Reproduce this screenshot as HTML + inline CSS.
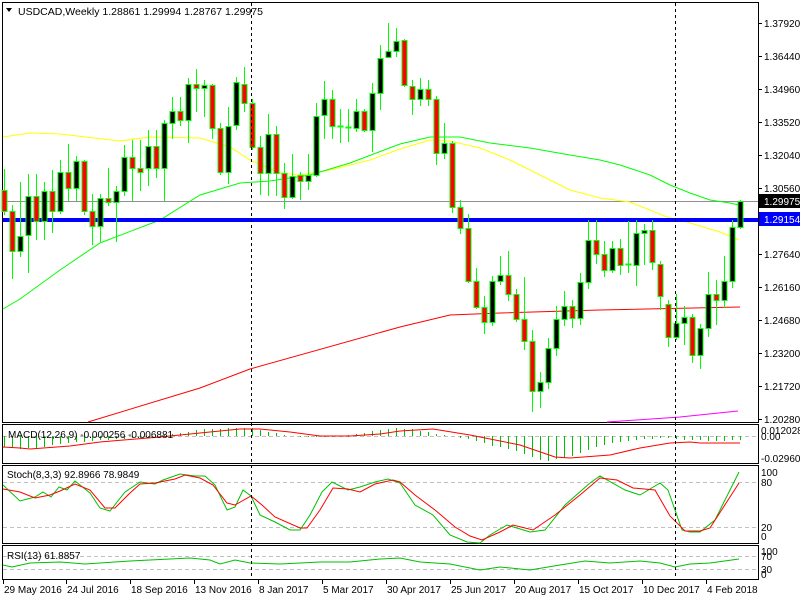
<!DOCTYPE html>
<html><head><meta charset="utf-8"><style>
html,body{margin:0;padding:0;background:#fff;width:800px;height:600px;overflow:hidden}
svg{display:block}
text{font-family:"Liberation Sans",sans-serif;font-size:10px;fill:#000}
</style></head><body>
<svg id="s" width="800" height="600" xmlns="http://www.w3.org/2000/svg"></svg>
<script>
var C=[
[190,211,169,215,0],[211,251,205,279,0],[251,236,182,257,1],[235,196,174,273,1],[196,221,174,240,0],[221,191,182,240,1],[191,211,170,233,0],[211,172,160,214,1],[172,188,144,201,0],[188,161,156,201,1],
[161,211,160,215,0],[211,226,194,245,0],[226,198,194,242,1],[198,202,168,206,0],[202,191,186,242,1],[191,157,145,196,1],[157,168,140,201,0],[168,172,140,191,0],[168,146,130,186,1],[146,168,130,178,0],
[168,123,120,201,1],[123,111,97,139,1],[111,120,97,126,0],[120,84,78,143,1],[84,88,69,112,0],[88,85,80,117,1],[85,128,84,139,0],[128,172,123,175,0],[172,126,107,184,1],[125,82,77,130,1],
[84,103,67,112,0],[103,147,99,150,0],[147,173,136,195,0],[173,134,114,196,1],[134,173,126,196,0],[173,197,163,209,0],[197,176,154,199,1],[175,181,172,200,0],[181,175,154,190,1],[175,116,103,177,1],
[115,99,81,139,1],[99,126,90,139,0],[127,126,109,143,2],[128,127,109,142,2],[128,111,99,132,1],[111,130,109,132,0],[130,93,83,152,1],[93,58,45,110,1],[57,51,23,58,1],[51,41,28,57,1],
[40,85,39,87,0],[86,99,80,115,0],[99,89,78,106,1],[89,99,80,106,0],[99,153,96,165,0],[153,143,123,159,1],[143,207,141,213,0],[207,228,200,234,0],[228,281,214,283,0],[281,307,268,309,0],
[307,322,296,334,0],[322,281,276,326,1],[281,275,256,285,1],[275,294,251,301,0],[294,319,289,322,0],[319,341,277,350,0],[341,391,330,412,0],[391,382,372,408,1],[382,348,338,389,1],[348,319,306,356,1],
[319,306,291,326,1],[306,318,300,328,0],[318,282,273,325,1],[282,240,220,289,1],[240,254,220,264,0],[254,270,241,277,0],[270,248,241,273,1],[248,265,239,275,0],[265,264,221,273,2],[265,233,220,286,1],
[233,230,224,265,1],[230,262,220,270,0],[264,296,261,310,0],[304,337,300,347,0],[337,323,294,340,1],[323,317,306,345,1],[317,355,314,363,0],[355,328,324,369,1],[328,294,272,337,1],[294,300,280,325,0],
[300,281,256,308,1],[281,227,220,288,1],[227,201,200,229,1]];
var o='';
function pl(p,c,w,extra){return '<polyline fill="none" stroke="'+c+'" stroke-width="'+(w||1)+'" '+(extra||'')+' points="'+p+'"/>';}
o+='<rect x="2.5" y="2.5" width="756" height="420" fill="none" stroke="#000"/>';
o+='<rect x="2.5" y="424.5" width="756" height="39" fill="none" stroke="#000"/>';
o+='<rect x="2.5" y="465.5" width="756" height="78" fill="none" stroke="#000"/>';
o+='<rect x="2.5" y="545.5" width="756" height="34" fill="none" stroke="#000"/>';
o+='<line x1="3" y1="201.5" x2="758" y2="201.5" stroke="#909090"/>';
o+=pl('3,137 30,133 60,134 120,141 150,137 200,138 230,147 250,160 280,173 300,175 330,170 370,160 400,149 430,140 450,141 480,148 510,160 540,175 570,190 600,198 630,202 667,217 687,222 700,226 720,232 739,240','#ffff00');
o+=pl('3,309 20,299 60,270 100,243 160,220 200,195 240,183 270,181 310,175 350,163 400,144 430,137 460,137 490,143 530,148 570,155 600,160 620,165 650,175 670,185 690,193 710,200 730,203 739,205','#00ff00');
o+=pl('88,422 200,388 250,369 400,327 450,315 500,313 600,310 740,307','#ff0000');
o+=pl('607,422 680,417 738,411','#ff00ff');
o+='<rect x="3" y="218" width="755" height="4" fill="#0000ff"/>';
for(var i=0;i<C.length;i++){var c=C[i],x=4+8*i+0.5;
o+='<line x1="'+x+'" y1="'+c[2]+'" x2="'+x+'" y2="'+c[3]+'" stroke="#00ff00"/>';
var t=Math.min(c[0],c[1]),b=Math.max(c[0],c[1]);
if(c[4]==2){o+='<line x1="'+(x-3)+'" y1="'+t+'.5" x2="'+(x+3)+'" y2="'+t+'.5" stroke="#00ff00" stroke-width="2"/>';continue;}
o+='<rect x="'+(x-2.5)+'" y="'+(t+0.5)+'" width="5" height="'+Math.max(b-t,1)+'" fill="'+(c[4]?'#000':'#ff0000')+'" stroke="#00ff00"/>';}
o+='<line x1="3" y1="436.5" x2="758" y2="436.5" stroke="#c0c0c0" stroke-dasharray="4,3"/>';
var H=[[3,447],[19,449],[35,448],[67,443],[107,440],[140,438],[163,435],[187,432],[203,429],[251,428],[275,433],[300,437],[330,437],[355,434],[395,428],[411,429],[443,435],[475,440],[490,445],[515,450],[539,460],[547,461],[571,457],[595,447],[611,443],[635,440],[667,438],[690,440],[715,441],[739,440]];
function interp(A,x){for(var k=0;k<A.length-1;k++){if(x>=A[k][0]&&x<=A[k+1][0]){var f=(x-A[k][0])/(A[k+1][0]-A[k][0]);return A[k][1]+f*(A[k+1][1]-A[k][1]);}}return A[A.length-1][1];}
for(var i=0;i<C.length;i++){var x=4+8*i+0.5;var v=Math.round(interp(H,x));o+='<line x1="'+x+'" y1="436" x2="'+x+'" y2="'+v+'" stroke="#00c000"/>';}
o+=pl('3,447 20,448 30,449 70,446 100,442 160,437 210,432 240,429 260,429 290,432 320,436 350,436 380,434 400,431 433,429 470,435 520,445 555,457 570,458 610,455 640,448 670,443 690,442 700,443 740,443','#ff0000');
o+='<line x1="3" y1="482.5" x2="758" y2="482.5" stroke="#c0c0c0" stroke-dasharray="4,3"/><line x1="3" y1="527.5" x2="758" y2="527.5" stroke="#c0c0c0" stroke-dasharray="4,3"/>';
o+=pl('3,485 20,501 35,497 43,492 51,497 59,487 67,490 75,481 90,493 100,508 110,511 125,492 140,482 155,484 163,480 180,474 195,476 205,476 215,485 227,510 235,507 243,490 251,496 260,515 275,522 290,530 300,530 310,515 322,492 332,482 348,490 360,487 375,482 388,479 400,483 415,505 433,515 450,535 467,542 480,543 490,535 507,525 530,532 545,530 565,505 590,483 600,476 625,490 640,495 660,483 668,490 682,530 690,532 700,532 715,520 739,472','#00c000');
o+=pl('3,489 20,492 35,498 50,495 60,491 75,484 90,490 105,508 115,508 130,493 140,484 155,483 175,479 185,475 200,478 213,485 227,503 235,505 251,496 262,505 275,517 300,528 307,528 320,510 333,488 348,489 360,492 375,484 393,480 400,482 415,495 435,510 455,527 470,536 482,540 500,532 513,525 533,530 555,515 580,495 600,478 617,480 633,488 655,490 670,516 685,531 700,531 710,528 739,483','#ff0000');
o+='<line x1="3" y1="556.5" x2="758" y2="556.5" stroke="#c0c0c0" stroke-dasharray="4,3"/><line x1="3" y1="569.5" x2="758" y2="569.5" stroke="#c0c0c0" stroke-dasharray="4,3"/>';
o+=pl('3,565 12,567 30,563 60,562 85,564 130,561 190,558 210,560 220,564 235,560 250,563 280,564 320,562 350,562 380,559 400,558 420,562 450,564 480,570 500,567 530,570 560,565 585,561 610,563 640,561 660,563 675,567 690,564 710,563 739,559','#00c000');
o+='<line x1="251.5" y1="3" x2="251.5" y2="579" stroke="#000" stroke-dasharray="3,3"/><line x1="675.5" y1="3" x2="675.5" y2="579" stroke="#000" stroke-dasharray="3,3"/>';
var P=[['1.37920',23],['1.36440',56],['1.34960',89],['1.33520',122],['1.32040',155],['1.30560',188],['1.27640',254],['1.26160',287],['1.24680',320],['1.23200',353],['1.21720',386],['1.20280',419]];
P.forEach(function(p){o+='<line x1="758" y1="'+p[1]+'.5" x2="762" y2="'+p[1]+'.5" stroke="#000"/><text x="764" y="'+(p[1]+4)+'">'+p[0]+'</text>';});
o+='<rect x="759" y="194" width="41" height="14" fill="#000"/><text x="764" y="205" style="fill:#fff">1.29975</text>';
o+='<rect x="759" y="212" width="41" height="14" fill="#0000ff"/><text x="764" y="223" style="fill:#fff">1.29154</text>';
var S=[['0.012028',430],['0.00',436],['-0.029605',458],['100',472],['80',482],['20',527],['0',536],['100',551],['70',556],['30',569],['0',574]];
S.forEach(function(p){o+='<text x="761" y="'+(p[1]+4)+'">'+p[0]+'</text>';});
o+='<path d="M6,8 L12,8 L9,12 Z" fill="#000"/><text x="18" y="15" style="font-size:10.5px">USDCAD,Weekly  1.28861 1.29994 1.28767 1.29975</text>';
o+='<text x="8" y="438">MACD(12,26,9) -0.000256 -0.006881</text>';
o+='<text x="7" y="478">Stoch(8,3,3) 92.8966 78.9849</text>';
o+='<text x="7" y="559">RSI(13) 61.8857</text>';
var T=[['29 May 2016',3],['24 Jul 2016',66],['18 Sep 2016',130],['13 Nov 2016',194],['8 Jan 2017',258],['5 Mar 2017',322],['30 Apr 2017',386],['25 Jun 2017',450],['20 Aug 2017',514],['15 Oct 2017',578],['10 Dec 2017',642],['4 Feb 2018',706]];
T.forEach(function(t){o+='<line x1="'+(t[1]+0.5)+'" y1="580" x2="'+(t[1]+0.5)+'" y2="584" stroke="#000"/><text x="'+(t[1]+1)+'" y="593">'+t[0]+'</text>';});
document.getElementById('s').innerHTML=o;
</script>
</body></html>
